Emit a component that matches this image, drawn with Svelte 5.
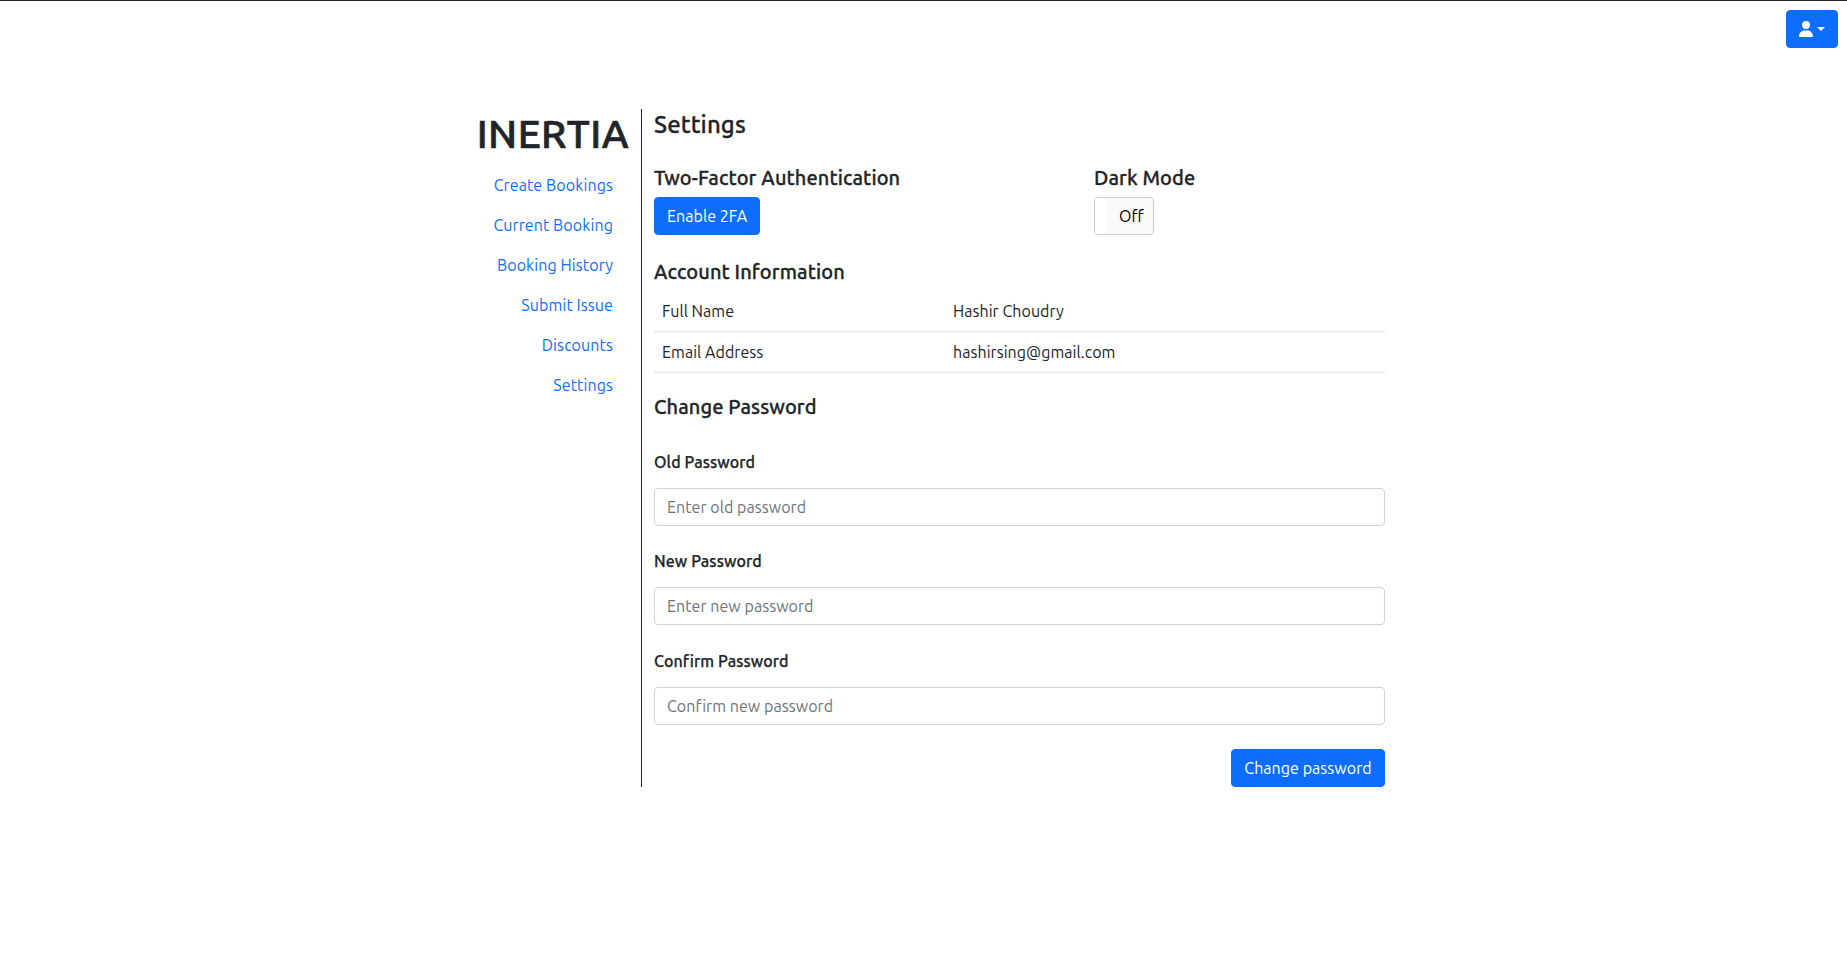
<script>
  const links = [
    'Create Bookings',
    'Current Booking',
    'Booking History',
    'Submit Issue',
    'Discounts',
    'Settings',
  ];
  const account = [
    { label: 'Full Name', value: 'Hashir Choudry' },
    { label: 'Email Address', value: 'hashirsing@gmail.com' },
  ];
  const fields = [
    { id: 'old', label: 'Old Password', hint: 'Enter old password' },
    { id: 'new', label: 'New Password', hint: 'Enter new password' },
    { id: 'confirm', label: 'Confirm Password', hint: 'Confirm new password' },
  ];
</script>

<div class="page">
  <header>
    <button class="btn user" aria-label="Account">
      <svg width="14" height="16" viewBox="0 0 448 512" fill="currentColor">
        <path d="M224 256A128 128 0 1 0 224 0a128 128 0 1 0 0 256zm-45.7 48C79.8 304 0 383.8 0 482.3C0 498.7 13.3 512 29.7 512H418.3c16.4 0 29.7-13.3 29.7-29.7C448 383.8 368.2 304 269.7 304H178.3z" />
      </svg>
      <span class="caret"></span>
    </button>
  </header>

  <main>
    <aside>
      <h1>INERTIA</h1>
      <nav>
        {#each links as link}
          <a href="#top">{link}</a>
        {/each}
      </nav>
    </aside>

    <section>
      <h4>Settings</h4>
      <div class="options">
        <div>
          <h5>Two-Factor Authentication</h5>
          <button class="btn enable">Enable 2FA</button>
        </div>
        <div>
          <h5>Dark Mode</h5>
          <button class="toggle"><span class="handle"></span><span class="state">Off</span></button>
        </div>
      </div>

      <h5>Account Information</h5>
      <table>
        <tbody>
          {#each account as row}
            <tr>
              <td>{row.label}</td>
              <td>{row.value}</td>
            </tr>
          {/each}
        </tbody>
      </table>

      <h5 class="change">Change Password</h5>
      <form>
        {#each fields as field}
          <div class="field">
            <label for={field.id}>{field.label}</label>
            <input id={field.id} type="password" placeholder={field.hint} />
          </div>
        {/each}
        <button type="button" class="btn submit">Change password</button>
      </form>
    </section>
  </main>
</div>

<style>
  :global(body) {
    background: #fff;
  }
  .page,
  .page * {
    box-sizing: border-box;
  }
  .page {
    font: 400 16px/24px Ubuntu, 'Noto Sans', sans-serif;
    color: #212529;
    border-top: 1px solid #212529;
    min-height: 969px;
    letter-spacing: 0.05px;
  }
  header {
    display: flex;
    justify-content: flex-end;
    padding: 9px 9px 0;
    height: 108px;
  }
  button,
  input {
    font: inherit;
    letter-spacing: inherit;
    margin: 0;
  }
  .btn {
    height: 38px;
    padding: 6px 12px;
    border: 1px solid #0d6efd;
    border-radius: 4px;
    background: #0d6efd;
    color: #fff;
    white-space: nowrap;
  }
  .user {
    display: flex;
    align-items: center;
    width: 52px;
  }
  .user svg {
    flex: none;
  }
  .caret {
    flex: none;
    margin-left: 4px;
    border-top: 4.8px solid;
    border-left: 4.8px solid transparent;
    border-right: 4.8px solid transparent;
  }
  main {
    display: flex;
    margin-left: 465px;
    width: 932px;
  }
  aside {
    width: 177px;
    padding-right: 12px;
    border-right: 1px solid #212529;
    text-align: right;
  }
  h1,
  h4,
  h5 {
    margin: 0 0 7px;
    padding-top: 1px;
    font-weight: 500;
    letter-spacing: 0.1px;
    -webkit-text-stroke: 0.3px currentColor;
  }
  h1 {
    font-size: 40px;
    line-height: 48px;
    letter-spacing: 0.4px;
    -webkit-text-stroke-width: 0.7px;
  }
  nav {
    display: flex;
    flex-direction: column;
  }
  a {
    padding: 8px 16px;
    color: #0d6efd;
    text-decoration: none;
    letter-spacing: 0.1px;
  }
  section {
    flex: 1;
    padding: 0 12px;
  }
  h4 {
    font-size: 24px;
    line-height: 29px;
  }
  h5 {
    font-size: 20px;
    line-height: 24px;
  }
  .options {
    display: grid;
    grid-template-columns: 440px 1fr;
    padding-top: 19px;
    margin-bottom: 24px;
  }
  .enable {
    width: 106px;
  }
  .toggle {
    display: flex;
    width: 60px;
    height: 38px;
    padding: 0;
    border: 1px solid #ccced0;
    border-radius: 4px;
    background: #f8f9fa;
    color: #000;
    overflow: hidden;
  }
  .handle {
    width: 12px;
    height: 36px;
    background: #fff;
    border-radius: 0 4px 4px 0;
  }
  .state {
    padding: 6px 0 0 12px;
  }
  table {
    width: 100%;
    border-collapse: separate;
    border-spacing: 0;
    table-layout: fixed;
    margin-bottom: 21px;
  }
  td {
    height: 41px;
    padding: 8px;
    border-bottom: 1px solid #dee2e6;
  }
  td:first-child {
    width: 291px;
  }
  .change {
    margin-bottom: 33px;
  }
  form {
    display: flex;
    flex-direction: column;
    gap: 25px;
  }
  .field {
    display: flex;
    flex-direction: column;
    gap: 16px;
  }
  .field:nth-child(3) {
    margin-top: 1px;
  }
  label {
    font-weight: 500;
    line-height: 20px;
    letter-spacing: 0.08px;
    -webkit-text-stroke: 0.25px currentColor;
  }
  input {
    width: 100%;
    height: 38px;
    padding: 6px 12px;
    border: 1px solid #ced4da;
    border-radius: 4px;
    background: #fff;
  }
  input::placeholder {
    color: #6c757d;
    opacity: 1;
  }
  .submit {
    align-self: flex-end;
    width: 154px;
    margin-top: -1px;
  }
</style>
